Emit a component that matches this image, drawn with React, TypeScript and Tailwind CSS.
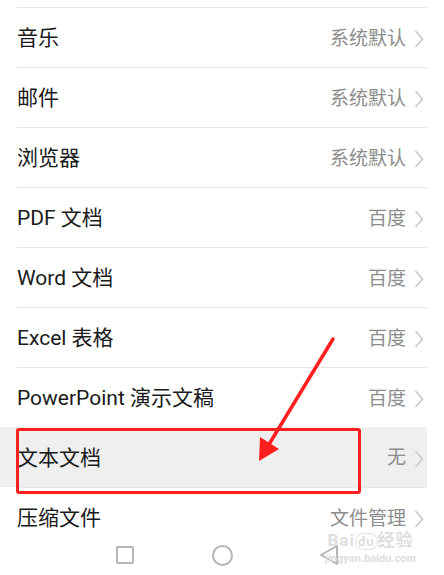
const rows = [
  { label: '音乐', value: '系统默认' },
  { label: '邮件', value: '系统默认' },
  { label: '浏览器', value: '系统默认' },
  { label: 'PDF 文档', value: '百度' },
  { label: 'Word 文档', value: '百度' },
  { label: 'Excel 表格', value: '百度' },
  { label: 'PowerPoint 演示文稿', value: '百度' },
  { label: '文本文档', value: '无', active: true },
  { label: '压缩文件', value: '文件管理' },
]

function Chevron() {
  return (
    <svg width="10" height="20" viewBox="0 0 10 20" className="ml-[8px] shrink-0">
      <path d="M1.5 2 L8.5 10 L1.5 18" fill="none" stroke="#c4c4c4" strokeWidth="1.3" />
    </svg>
  )
}

function Row({ label, value, active }: { label: string; value: string; active?: boolean }) {
  return (
    <div className="pr-[17px]">
      <div
        className={
          active
            ? 'flex h-[60px] items-center bg-[#efefef] pl-[17px] pr-[3px] pt-[3px]'
            : 'ml-[17px] flex h-[60px] items-center border-t border-[#e6e6e6] pr-[3px] pt-[3px]'
        }
      >
        <span className="flex-1 text-[21px] text-[#1a1a1a]">{label}</span>
        <span className="text-[19px] text-[#8c8c8c]">{value}</span>
        <Chevron />
      </div>
    </div>
  )
}

function NavBar() {
  return (
    <div className="relative flex h-[40px] items-center bg-white">
      <div className="flex w-full items-center">
        <div className="ml-[116px] h-[18px] w-[18px] rounded-[2px] border-2 border-[#b5b5b5]" />
        <div className="ml-[78px] h-[21px] w-[21px] rounded-full border-2 border-[#b5b5b5]" />
        <svg width="20" height="22" viewBox="0 0 20 22" className="ml-[86px]">
          <path d="M18 2 L2 11 L18 20 Z" fill="none" stroke="#b5b5b5" strokeWidth="2" strokeLinejoin="round" />
        </svg>
      </div>
      {/* baidu jingyan watermark */}
      <div className="absolute right-[28px] top-[-3px] flex flex-col items-center leading-none text-[#dedede]">
        <span className="text-[17px] font-bold tracking-[1px]">
          Bai<span className="rounded-full border border-[#dedede] px-[2px] text-[13px]">du</span>经验
        </span>
        <span className="mt-[4px] text-[11px] font-bold">jingyan.baidu.com</span>
      </div>
    </div>
  )
}

export default function App() {
  return (
    <div
      className="relative h-[575px] w-[444px] overflow-hidden bg-white"
      style={{ fontFamily: 'Roboto, "Noto Sans CJK SC", sans-serif' }}
    >
      <div className="h-[535px] overflow-hidden">
        <div className="h-[7px]" />
        {rows.map((r) => (
          <Row key={r.label} {...r} />
        ))}
      </div>
      <NavBar />

      {/* annotation: red box + arrow */}
      <div className="absolute left-[16px] top-[428px] h-[66px] w-[345px] rounded-[3px] border-[3px] border-[#ff1f1f]" />
      <svg className="absolute left-0 top-0" width="444" height="575" viewBox="0 0 444 575">
        <path d="M333 339 L268 446" stroke="#ff1f1f" strokeWidth="3.5" strokeLinecap="round" />
        <path d="M259 461 L260 437 L279 449 Z" fill="#ff1f1f" />
      </svg>
    </div>
  )
}
